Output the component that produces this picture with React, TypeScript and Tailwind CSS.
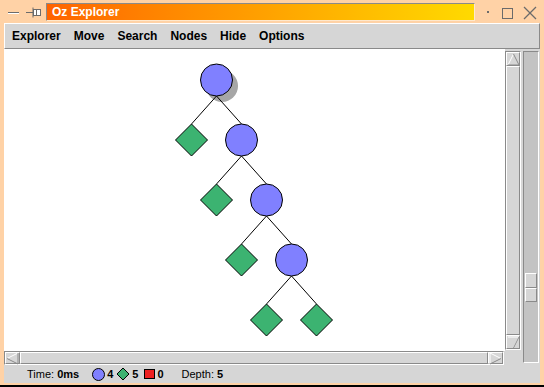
import React from "react";

const raised =
  "border border-t-white border-l-white border-b-[#8a8a8a] border-r-[#8a8a8a]";
const sunken =
  "border border-t-[#8a8a8a] border-l-[#8a8a8a] border-b-white border-r-white";

const circles: [number, number][] = [
  [216.5, 80],
  [241.5, 140],
  [266.5, 200],
  [291.5, 260],
];
const diamonds: [number, number][] = [
  [191.5, 140],
  [216.5, 200],
  [241.5, 260],
  [266.5, 320],
  [316.5, 320],
];

function Diamond({ x, y, r }: { x: number; y: number; r: number }) {
  return (
    <polygon
      points={`${x},${y - r} ${x + r},${y} ${x},${y + r} ${x - r},${y}`}
      fill="#3cb371"
      stroke="#000"
      strokeWidth={1}
    />
  );
}

function Tree() {
  return (
    <svg width={501} height={302} className="block">
      <g transform="translate(-4,-49)">
        <circle cx={222} cy={86} r={16} fill="#a6a6a6" />
        {circles.map(([x, y]) => (
          <g key={`e${x}`} stroke="#000" strokeWidth={1}>
            <line x1={x} y1={y + 16} x2={x - 25} y2={y + 44} />
            <line x1={x} y1={y + 16} x2={x + 25} y2={y + 44} />
          </g>
        ))}
        {circles.map(([x, y]) => (
          <circle
            key={`c${x}`}
            cx={x}
            cy={y}
            r={16}
            fill="#8080ff"
            stroke="#000"
            strokeWidth={1}
          />
        ))}
        {diamonds.map(([x, y]) => (
          <Diamond key={`d${x}${y}`} x={x} y={y} r={16} />
        ))}
      </g>
    </svg>
  );
}

function Arrow({ dir }: { dir: "up" | "down" | "left" | "right" }) {
  const pts = {
    up: { a: "1,12 6.5,1", b: "6.5,1 12,12 1,12" },
    down: { a: "1,1 12,1 6.5,12", b: "6.5,12 12,1" },
    left: { a: "12,1 1,6.5", b: "1,6.5 12,12 12,1" },
    right: { a: "1,12 1,1 12,6.5", b: "12,6.5 1,12" },
  }[dir];
  return (
    <svg width={13} height={13} className="block">
      <polyline points={pts.a} fill="none" stroke="#fff" strokeWidth={1} />
      <polyline points={pts.b} fill="none" stroke="#8a8a8a" strokeWidth={1} />
    </svg>
  );
}

function TitleBar() {
  return (
    <div className="h-[23px] flex items-center shrink-0">
      <svg width={44} height={23} className="block shrink-0">
        <line x1={8} y1={12.5} x2={19} y2={12.5} stroke="#6b6b6b" />
        <line x1={8} y1={13.5} x2={19} y2={13.5} stroke="#fff" />
        <line x1={26} y1={12.5} x2={33} y2={12.5} stroke="#6b6b6b" />
        <rect x={33.5} y={9.5} width={7} height={6} fill="#fff" stroke="#6b6b6b" />
        <line x1={36.5} y1={9} x2={36.5} y2={16} stroke="#6b6b6b" />
        <line x1={33} y1={7.5} x2={33} y2={17.5} stroke="#6b6b6b" />
      </svg>
      <div className="ml-[2px] w-[429px] h-[18px] flex items-center pl-[5px] border border-t-[#8a8a8a] border-l-[#8a8a8a] border-b-[#ffe8cc] border-r-[#ffe8cc] bg-gradient-to-r from-[#ff6300] via-[#ffa000] to-[#ffda00]">
        <span className="text-white font-bold text-[12px] leading-none">Oz Explorer</span>
      </div>
      <svg width={69} height={23} className="block shrink-0">
        <rect x={12} y={11} width={2} height={2} fill="#6b6b6b" />
        <rect x={27.5} y={8.5} width={10} height={10} fill="none" stroke="#6b6b6b" />
        <line x1={49} y1={7} x2={61} y2={19} stroke="#6b6b6b" strokeWidth={1.2} />
        <line x1={61} y1={7} x2={49} y2={19} stroke="#6b6b6b" strokeWidth={1.2} />
      </svg>
    </div>
  );
}

function MenuBar() {
  const items = ["Explorer", "Move", "Search", "Nodes", "Hide", "Options"];
  return (
    <div className="h-[26px] shrink-0 flex items-center gap-[13px] pl-[7px] border-t border-t-white border-b border-b-[#8a8a8a] border-r border-r-[#8a8a8a] border-l border-l-white">
      {items.map((i) => (
        <span key={i} className="text-[12px] font-bold text-black leading-none">
          {i}
        </span>
      ))}
    </div>
  );
}

function VScroll() {
  return (
    <div className="w-[16px] pt-[2px] pb-[1px] flex flex-col">
      <div className={`${sunken} flex-1 flex flex-col`}>
        <div className={`${raised} h-[14px] flex items-center justify-center`}>
          <Arrow dir="up" />
        </div>
        <div className={`${raised} flex-1`} />
        <div className={`${raised} h-[14px] flex items-center justify-center`}>
          <Arrow dir="down" />
        </div>
      </div>
    </div>
  );
}

function HScroll() {
  return (
    <div className="h-[14px] flex">
      <div className={`${sunken} w-[500px] flex`}>
        <div className={`${raised} w-[15px] flex items-center justify-center`}>
          <Arrow dir="left" />
        </div>
        <div className={`${raised} flex-1`} />
        <div className={`${raised} w-[15px] flex items-center justify-center`}>
          <Arrow dir="right" />
        </div>
      </div>
    </div>
  );
}

function ZoomSlider() {
  return (
    <div className="ml-[3px] mt-[2px] w-[16px] h-[312px] bg-[#c3c3c3] border border-t-[#8a8a8a] border-l-[#8a8a8a] border-b-white border-r-white flex flex-col items-center">
      <div className="mt-[221px] w-[12px] flex flex-col">
        <div className={`${raised} h-[15px] bg-[#d6d6d6]`} />
        <div className={`${raised} h-[14px] bg-[#d6d6d6]`} />
      </div>
    </div>
  );
}

function StatusBar() {
  return (
    <div className="h-[18px] flex items-center pl-[23px] text-[11px] leading-none text-black">
      <span>
        Time: <b>0ms</b>
      </span>
      <span className="ml-[13px] w-[13px] h-[13px] rounded-full bg-[#8080ff] border border-black" />
      <b className="ml-[2px]">4</b>
      <svg width={14} height={14} className="ml-[3px] block">
        <polygon points="7,1 13,7 7,13 1,7" fill="#3cb371" stroke="#000" />
      </svg>
      <b className="ml-[2px]">5</b>
      <span className="ml-[6px] w-[11px] h-[10px] bg-[#ee2020] border border-black" />
      <b className="ml-[2px]">0</b>
      <span className="ml-[18px]">
        Depth: <b>5</b>
      </span>
    </div>
  );
}

export default function App() {
  return (
    <div className="w-[544px] h-[387px] bg-[#ffd2a6] border-b-2 border-b-black flex flex-col font-['Liberation_Sans',Arial,sans-serif] overflow-hidden">
      <TitleBar />
      <div className="ml-[4px] w-[536px] h-[360px] bg-[#d6d6d6] flex flex-col">
        <MenuBar />
        <div className="h-[316px] flex">
          <div className="w-[516px] flex flex-col">
            <div className="h-[302px] flex">
              <div className="w-[501px] bg-white">
                <Tree />
              </div>
              <VScroll />
            </div>
            <HScroll />
          </div>
          <ZoomSlider />
        </div>
        <StatusBar />
      </div>
    </div>
  );
}
